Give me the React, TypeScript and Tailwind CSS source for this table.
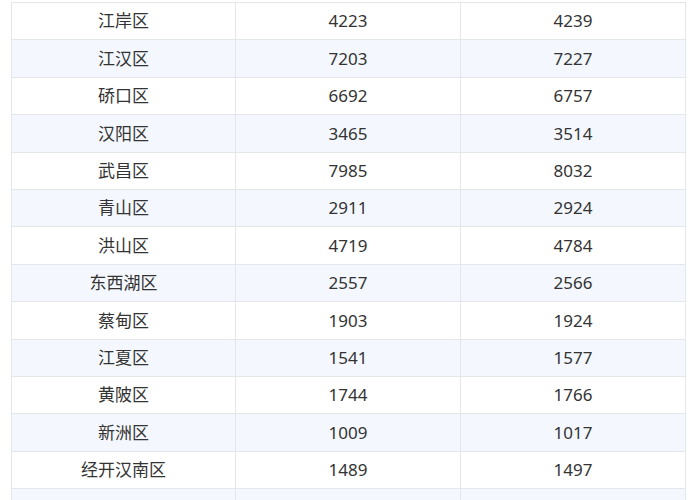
const rows: [string, string, string][] = [
  ["江岸区", "4223", "4239"],
  ["江汉区", "7203", "7227"],
  ["硚口区", "6692", "6757"],
  ["汉阳区", "3465", "3514"],
  ["武昌区", "7985", "8032"],
  ["青山区", "2911", "2924"],
  ["洪山区", "4719", "4784"],
  ["东西湖区", "2557", "2566"],
  ["蔡甸区", "1903", "1924"],
  ["江夏区", "1541", "1577"],
  ["黄陂区", "1744", "1766"],
  ["新洲区", "1009", "1017"],
  ["经开汉南区", "1489", "1497"],
  ["", "", ""],
];

export default function App() {
  return (
    <div
      className="w-[700px] h-[500px] overflow-hidden bg-white pt-[2px] pl-[11px]"
      style={{ fontFamily: '"Noto Sans", "Noto Sans CJK SC", sans-serif' }}
    >
      <div className="w-[675px] border-t border-l border-r border-[#e3e6eb]">
        {rows.map((r, i) => (
          <div
            key={i}
            className={`grid grid-cols-[224px_225px_1fr] h-[37.4px] border-b border-[#e3e6eb] text-[17px] text-[#333333] ${
              i % 2 === 1 ? "bg-[#f4f8fe]" : "bg-white"
            }`}
          >
            <div className="flex items-center justify-center border-r border-[#e3e6eb]">{r[0]}</div>
            <div className="flex items-center justify-center border-r border-[#e3e6eb]">{r[1]}</div>
            <div className="flex items-center justify-center">{r[2]}</div>
          </div>
        ))}
      </div>
    </div>
  );
}
